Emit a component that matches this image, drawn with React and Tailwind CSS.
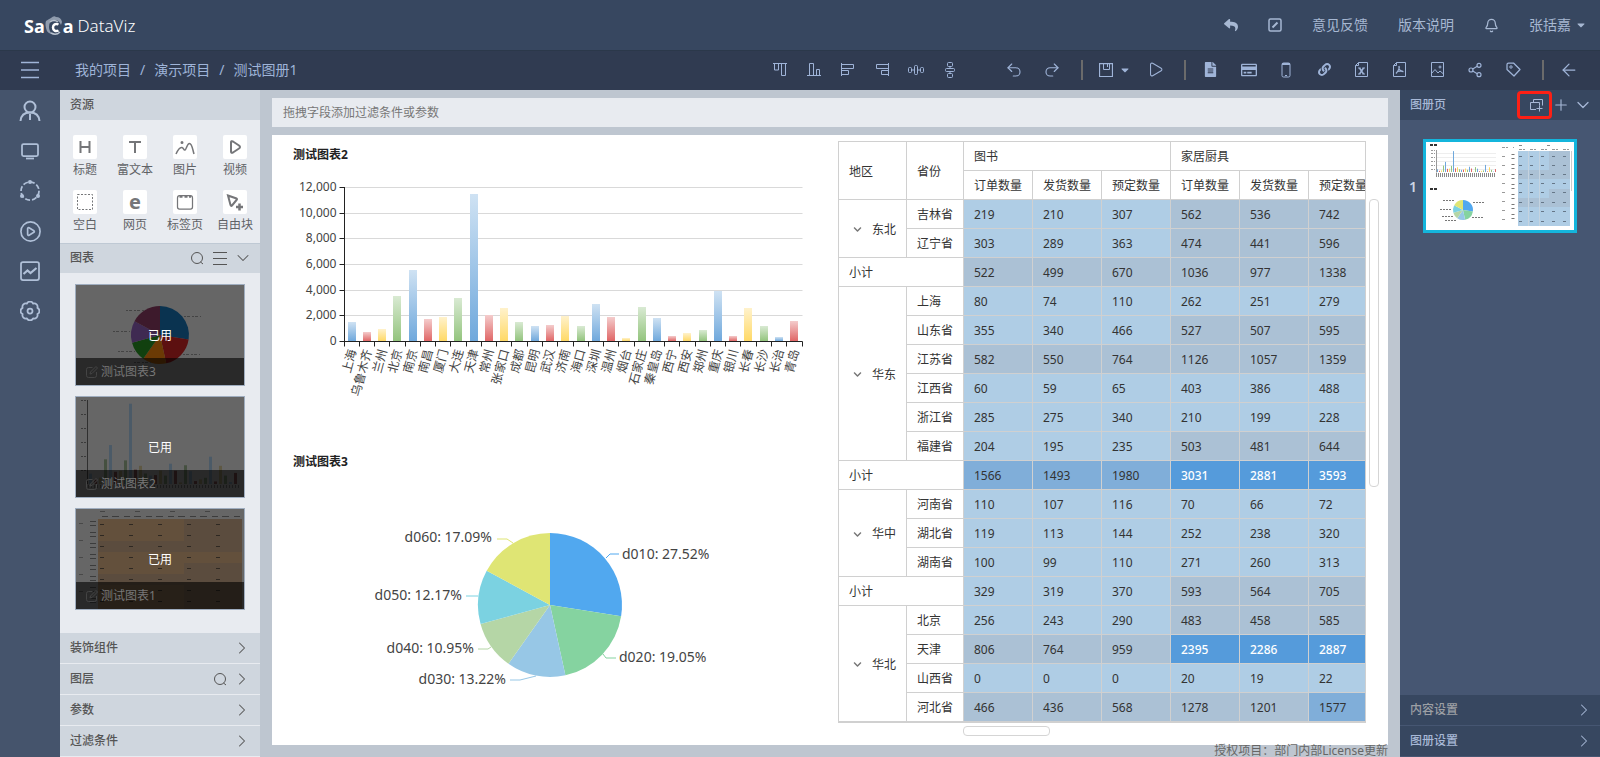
import {
  ArrowLeft,
  Bell,
  ChevronDown,
  ChevronRight,
  CirclePlay,
  Play,
  Plus,
  Redo2,
  Share2,
  Undo2,
} from "lucide-react";
import { FaCaretDown, FaChevronDown, FaFileAlt, FaLink, FaRegCreditCard, FaReply } from "react-icons/fa";

const cities = [
  ["上海", 1480],
  ["乌鲁木齐", 675],
  ["兰州", 900],
  ["北京", 3530],
  ["南京", 5560],
  ["南昌", 1740],
  ["厦门", 1870],
  ["大连", 3380],
  ["天津", 11480],
  ["常州", 2050],
  ["张家口", 2600],
  ["成都", 1500],
  ["昆明", 1200],
  ["武汉", 1270],
  ["济南", 1920],
  ["海口", 1200],
  ["深圳", 2900],
  ["温州", 1900],
  ["烟台", 220],
  ["石家庄", 2680],
  ["秦皇岛", 1820],
  ["西宁", 420],
  ["西安", 650],
  ["郑州", 880],
  ["重庆", 3900],
  ["银川", 360],
  ["长春", 2600],
  ["长沙", 1200],
  ["长治", 280],
  ["青岛", 1580],
];

const barColors = [
  ["#cfe2f3", "#6fa8dc"],
  ["#f4cccc", "#e06666"],
  ["#fff2cc", "#ffd966"],
  ["#d9ead3", "#93c47d"],
];

const slices = [
  { name: "d010", value: 27.52, color: "#51a8ef", line: "313,88 317,84 326,84", x: 329, y: 89, anchor: "start" },
  { name: "d020", value: 19.05, color: "#85d3a0", line: "310,184 313,188 323,188", x: 326, y: 192, anchor: "start" },
  { name: "d030", value: 13.22, color: "#97c7e6", line: "243,206 227,210 217,210", x: 213, y: 214, anchor: "end" },
  { name: "d040", value: 10.95, color: "#b5d6a6", line: "198,177 195,179 185,179", x: 181, y: 183, anchor: "end" },
  { name: "d050", value: 12.17, color: "#7bd2e1", line: "185,126 173,126", x: 169, y: 130, anchor: "end" },
  { name: "d060", value: 17.09, color: "#dfe574", line: "220,73 214,69 204,69", x: 199, y: 72, anchor: "end" },
];

const darkSlices = ["#0a3350", "#5c1010", "#6b3a05", "#11400f", "#3f2a52", "#3d1a2c"];

const regions = [
  {
    name: "东北",
    rows: [
      ["吉林省", 219, 210, 307, 562, 536, 742],
      ["辽宁省", 303, 289, 363, 474, 441, 596],
    ],
    total: [522, 499, 670, 1036, 977, 1338],
  },
  {
    name: "华东",
    rows: [
      ["上海", 80, 74, 110, 262, 251, 279],
      ["山东省", 355, 340, 466, 527, 507, 595],
      ["江苏省", 582, 550, 764, 1126, 1057, 1359],
      ["江西省", 60, 59, 65, 403, 386, 488],
      ["浙江省", 285, 275, 340, 210, 199, 228],
      ["福建省", 204, 195, 235, 503, 481, 644],
    ],
    total: [1566, 1493, 1980, 3031, 2881, 3593],
  },
  {
    name: "华中",
    rows: [
      ["河南省", 110, 107, 116, 70, 66, 72],
      ["湖北省", 119, 113, 144, 252, 238, 320],
      ["湖南省", 100, 99, 110, 271, 260, 313],
    ],
    total: [329, 319, 370, 593, 564, 705],
  },
  {
    name: "华北",
    rows: [
      ["北京", 256, 243, 290, 483, 458, 585],
      ["天津", 806, 764, 959, 2395, 2286, 2887],
      ["山西省", 0, 0, 0, 20, 19, 22],
      ["河北省", 466, 436, 568, 1278, 1201, 1577],
    ],
  },
];

const measures = ["订单数量", "发货数量", "预定数量"];
const lowLimits = [450, 430, 550];

function cellTone(value, index) {
  if (value > 2100) return "bg-[#559bdb] text-white font-medium";
  if (value > 1400) return "bg-[#80aed9] font-normal";
  if (value > lowLimits[index % 3]) return "bg-[#abc1d5] font-normal";
  return "bg-[#afcde5] font-normal";
}

function slicePaths(cx, cy, r) {
  let angle = 0;
  const point = (a) => `${cx + r * Math.sin(a)},${cy - r * Math.cos(a)}`;
  return slices.map((s) => {
    const start = angle;
    angle += (s.value / 100) * Math.PI * 2;
    return `M${cx},${cy}L${point(start)}A${r},${r} 0 0 1 ${point(angle)}Z`;
  });
}

/* ---------- icons ---------- */

function Icon({ size = 14, box = 14, width = 1, className, children }) {
  return (
    <svg
      width={size}
      height={size}
      viewBox={`0 0 ${box} ${box}`}
      fill="none"
      stroke="currentColor"
      strokeWidth={width}
      className={className}
      aria-hidden="true"
    >
      {children}
    </svg>
  );
}

const AlignTop = () => (
  <Icon>
    <path d="M0 .5h14M1.5.5v6.500h4V.5M8.500.5v12h4V.5" />
  </Icon>
);
const AlignBottom = () => (
  <Icon>
    <path d="M0 12.500h14M2.500 12.500V.5h4v12M9.500 12.500V6.500h3v6" />
  </Icon>
);
const AlignLeft = () => (
  <Icon>
    <path d="M.5 0v13M.5 1.500h12v4H.5M.5 7.500h7v4h-7" />
  </Icon>
);
const AlignRight = () => (
  <Icon>
    <path d="M13.500 0v13M13.500 1.500h-12v4h12M13.500 7.500h-7v4h7" />
  </Icon>
);
const DistributeX = () => (
  <Icon size={16} box={16}>
    <rect x=".5" y="5.500" width="3" height="5" rx="1" />
    <rect x="6.500" y="3.500" width="3" height="9" rx="1" />
    <rect x="12.500" y="5.500" width="3" height="5" rx="1" />
    <path d="M3.500 8h3M9.500 8h3" />
  </Icon>
);
const DistributeY = () => (
  <Icon size={16} box={16}>
    <rect x="5.500" y=".5" width="5" height="4" rx="1" />
    <rect x="3.500" y="6.500" width="9" height="3" rx="1" />
    <rect x="5.500" y="11.500" width="5" height="4" rx="1" />
    <path d="M8 4.500v2M8 9.500v2" />
  </Icon>
);
const Save = () => (
  <Icon>
    <path d="M.5.5h13v13H.5z" strokeWidth="1.250" />
    <path d="M4.500.5v6h6v-6M8.500 1v3" />
  </Icon>
);
const Phone = () => (
  <Icon size={16} box={16}>
    <rect x="4" y="1" width="8" height="14" rx="1.500" />
    <path d="M4 2h8" strokeWidth="2" />
    <path d="M7 13.500h2" />
  </Icon>
);
const ExcelFile = () => (
  <Icon size={15} box={15}>
    <path d="M4.500.5h9v14h-12v-11zM4.500.5v3h-3" />
    <path d="M5.500 6l4 6M9.500 6l-4 6" strokeWidth="1.500" />
    <path d="M4 6h2.500M8.500 6H11M4 12h2.500M8.500 12H11" />
  </Icon>
);
const PdfFile = () => (
  <Icon size={15} box={15}>
    <path d="M4.500.5h9v14h-12v-11zM4.500.5v3h-3" />
    <path d="M7 4c1 2 0 4-3 7.500M7 4v3c1 2 2 2.500 4.500 2.500M5.500 9.500l5-.5" strokeWidth="1.250" />
  </Icon>
);
const ImageFile = () => (
  <Icon size={15} box={15}>
    <path d="M1.500.5h12v14h-12zM1.500 11.500l3.500-4 3 3.500 2-2 3.500 3" />
    <circle cx="10" cy="5" r="1" />
  </Icon>
);
const ShareRing = () => <Share2 size={16} strokeWidth={1.75} />;
const TagIcon = () => (
  <Icon size={15} box={15}>
    <path d="M1 2.500Q1 1 2.500 1h5L14 7.500 8 14 1 7.500z" strokeWidth="1.250" strokeLinejoin="round" />
    <circle cx="5" cy="5" r="1.200" />
  </Icon>
);
const SearchIcon = () => (
  <Icon>
    <circle cx="7" cy="7" r="5.500" />
    <path d="M10.500 11l2.500 2" />
  </Icon>
);
const ListIcon = () => (
  <Icon>
    <path d="M0 1.500h14M0 7.500h14M0 13.500h14" />
  </Icon>
);
const EditIcon = () => (
  <Icon size={12} box={12}>
    <path d="M6.500 1.500H2.500q-2 0-2 2v6q0 2 2 2h6q2 0 2-2V6M4 8l.5-2L10 .5 11.500 2 6 7.500z" />
  </Icon>
);

/* ---------- header ---------- */

function Logo() {
  return (
    <div className="flex items-center pt-[2px] text-white">
      <span className="text-lg leading-5 font-bold">Sa</span>
      <svg width="18" height="20" viewBox="0 0 18 20" fill="none" aria-hidden="true">
        <path d="M1 5Q4 3 6 2q3-3 5-1 5 0 6 5l-1 3q-2-5-6-5-6 0-6 7 0 5 4 7-6 0-7-6-1-4 0-7z" fill="#8f9bad" />
        <path d="M5 6q4-3 8 0M6 17q5 3 9-1" stroke="#b9c2ce" strokeWidth="1.500" />
        <path d="M13.500 8.500C10.500 7 8 8.500 8 11.500s2.500 4.500 5.500 3" stroke="#fff" strokeWidth="2.500" />
      </svg>
      <span className="text-lg leading-5 font-bold">a</span>
      <span className="pl-1 text-[17px] leading-5 font-light">DataViz</span>
    </div>
  );
}

function Header() {
  return (
    <header className="flex h-[50px] shrink-0 items-center justify-between bg-[#374760] pr-[15px] pl-6 text-sm text-[#a7b8d2]">
      <Logo />
      <nav className="flex items-center gap-[30px]">
        <button aria-label="返回">
          <FaReply size={14} />
        </button>
        <button aria-label="全屏">
          <Icon width={1.5}>
            <rect x="1" y="1" width="12" height="12" rx="1.500" />
            <path d="M4.500 9.500l5-5" strokeWidth="2" />
          </Icon>
        </button>
        <a href="#feedback">意见反馈</a>
        <a href="#release">版本说明</a>
        <button aria-label="通知">
          <Bell size={15} strokeWidth={2} />
        </button>
        <button className="flex items-center gap-[6px]">
          张括嘉
          <FaCaretDown size={12} className="w-2" />
        </button>
      </nav>
    </header>
  );
}

const alignTools = [
  ["顶部对齐", <AlignTop />],
  ["底部对齐", <AlignBottom />],
  ["左对齐", <AlignLeft />],
  ["右对齐", <AlignRight />],
  ["水平分布", <DistributeX />],
  ["垂直分布", <DistributeY />],
];

const outputTools = [
  ["文档", <FaFileAlt size={15} />],
  ["卡片", <FaRegCreditCard size={16} />],
  ["手机", <Phone />],
  ["链接", <FaLink size={13} />],
  ["导出Excel", <ExcelFile />],
  ["导出PDF", <PdfFile />],
  ["导出图片", <ImageFile />],
  ["分享", <ShareRing />],
  ["标签", <TagIcon />],
];

function Divider() {
  return <span className="h-5 w-[2px] bg-[#6b6b6b]" />;
}

function Toolbar() {
  return (
    <div className="flex h-10 shrink-0 items-center bg-[#303b51] pb-px text-[#9fb4d8] inset-shadow-[0_1px_0_#2b384a]">
      <button aria-label="菜单" className="flex w-[60px] justify-center">
        <Icon size={18} box={18} width={1.5}>
          <path d="M0 1.500h18M0 9h18M0 16.500h18" />
        </Icon>
      </button>
      <nav className="flex gap-[9px] pl-[15px] text-sm">
        <a href="#projects">我的项目</a>
        <span>/</span>
        <a href="#demo">演示项目</a>
        <span>/</span>
        <a href="#book">测试图册1</a>
      </nav>
      <div className="ml-auto flex items-center">
        {alignTools.map(([label, icon]) => (
          <button key={label} aria-label={label} className="flex w-[34px] justify-center">
            {icon}
          </button>
        ))}
      </div>
      <div className="flex items-center pr-[10px] pl-7">
        <button aria-label="撤销" className="flex w-[38px] justify-center">
          <Undo2 size={18} strokeWidth={1.5} />
        </button>
        <button aria-label="重做" className="flex w-[38px] justify-center">
          <Redo2 size={18} strokeWidth={1.5} />
        </button>
      </div>
      <Divider />
      <div className="flex items-center pr-5 pl-4">
        <button aria-label="保存" className="flex items-center gap-[6px]">
          <Save />
          <FaCaretDown size={12} />
        </button>
        <button aria-label="播放" className="pl-4">
          <Play size={17} strokeWidth={1.5} />
        </button>
      </div>
      <Divider />
      <div className="grid w-[356px] grid-cols-9 pr-[10px] pl-[6px]">
        {outputTools.map(([label, icon]) => (
          <button key={label} aria-label={label} className="flex items-center justify-center">
            {icon}
          </button>
        ))}
      </div>
      <Divider />
      <button aria-label="退出" className="flex w-14 justify-center pr-[6px]">
        <ArrowLeft size={20} strokeWidth={1.5} />
      </button>
    </div>
  );
}

/* ---------- left side ---------- */

function SideRail() {
  const items = [
    [
      "用户",
      <Icon size={22} box={22} width={2}>
        <circle cx="11" cy="7" r="5.500" />
        <path d="M1.500 21c.5-5.500 4-8.500 9.500-8.500s9 3 9.500 8.500M11 14v6" />
      </Icon>,
    ],
    [
      "屏幕",
      <Icon size={20} box={20} width={1.75}>
        <rect x="2" y="3" width="16" height="12" rx="1.500" />
        <path d="M6 17.500h8" />
      </Icon>,
    ],
    [
      "关系",
      <Icon size={22} box={22} width={1.75}>
        <circle cx="11" cy="11" r="9" strokeDasharray="5 2" />
        <circle cx="11" cy="2" r="2" fill="currentColor" stroke="none" />
        <circle cx="3" cy="16" r="2" fill="currentColor" stroke="none" />
        <circle cx="19" cy="16" r="2" fill="currentColor" stroke="none" />
      </Icon>,
    ],
    ["播放", <CirclePlay size={23} strokeWidth={1.75} />],
    [
      "图表",
      <Icon size={20} box={20} width={1.75}>
        <rect x="1" y="1" width="18" height="18" rx="2" />
        <path d="M3.500 13l4-3.500 3 2.500 6-5" strokeWidth="2.200" />
      </Icon>,
    ],
    [
      "设置",
      <Icon size={20} box={20} width={1.75}>
        <path
          d="M17.400 6.900a3.400 3.400 0 0 1 0 6.200a3.400 3.400 0 0 1-4.300 4.300a3.400 3.400 0 0 1-6.200 0a3.400 3.400 0 0 1-4.300-4.300a3.400 3.400 0 0 1 0-6.200a3.400 3.400 0 0 1 4.300-4.300a3.400 3.400 0 0 1 6.200 0a3.400 3.400 0 0 1 4.300 4.300z"
          strokeLinejoin="round"
        />
        <circle cx="10" cy="10" r="2.500" />
      </Icon>,
    ],
  ];
  return (
    <aside className="w-[60px] shrink-0 bg-[#45546c] pt-px text-[#b0c0d8]">
      {items.map(([label, icon]) => (
        <button key={label} aria-label={label} className="flex h-10 w-full items-center justify-center">
          {icon}
        </button>
      ))}
    </aside>
  );
}

const widgets = [
  ["标题", <path d="M2.500 1v12M11.500 1v12M2.500 7h9" />],
  ["富文本", <path d="M1 2h12M7 2v11" />],
  [
    "图片",
    <g strokeWidth="1.500">
      <path d="M-2 14c2-4.500 4-7 6-6.500s1.500 3 3 2.500S9 3.500 11.500 3.500 14.500 9 16 14" />
      <circle cx="4" cy="2.500" r=".75" />
    </g>,
  ],
  ["视频", <path d="M3 2.500Q3 .5 5 1.500l6 4q2 1.500 0 3l-6 4q-2 1-2-1z" />],
  ["空白", <path d="M-.5-.5h15v15h-15z" strokeDasharray="2 1.500" strokeWidth="1" />],
  ["网页", null],
  [
    "标签页",
    <g>
      <path d="M-.5 3q0-2.500 2-2.500h11q2 0 2 2.500v9q0 2-2 2h-11q-2 0-2-2z" strokeWidth="1.250" />
      <path d="M1.500 1.500h3M6.500 1.500h3M11 1.500h2" strokeWidth="2.500" />
    </g>,
  ],
  [
    "自由块",
    <g>
      <path d="M0 .5l8.500 3q1 .5 0 1.500l-4.500 5.500q-1 1-1.500-.5z" />
      <path d="M11.500 8.500v7M8 12h7" strokeWidth="2.500" />
    </g>,
  ],
];

function Palette() {
  return (
    <div className="grid grid-cols-4 gap-y-3 bg-[#e8ebf0] pt-[15px] pb-[10px] text-[#606266]">
      {widgets.map(([label, drawing]) => (
        <button key={label} className="flex flex-col items-center gap-[3px]">
          <span className="flex h-6 w-6 items-center justify-center rounded-xs bg-white text-[#757679]">
            {drawing ? (
              <Icon width={2} className="overflow-visible">
                {drawing}
              </Icon>
            ) : (
              <b className="text-xl leading-5">e</b>
            )}
          </span>
          <span className="leading-4">{label}</span>
        </button>
      ))}
    </div>
  );
}

function PieThumb() {
  const paths = slicePaths(84, 50, 29);
  return (
    <g>
      {paths.map((d, i) => (
        <path key={d} d={d} fill={darkSlices[i]} />
      ))}
      <path
        d="M50 25.500h18M108 31.500h17M37 46.500h17M42 66.500h17M107 69.500h17M58 77.500h17"
        stroke="#444"
        strokeDasharray="2 1 3 2"
      />
    </g>
  );
}

function BarThumb() {
  const dark = ["#4b5a67", "#4a2e2e", "#5e5843", "#455040"];
  return (
    <g>
      <path d="M11.500 3v84" stroke="#2f2f2f" />
      <path
        d="M5 3.500h6M5 17.500h6M5 31.500h6M5 45.500h6M5 59.500h6M5 73.500h6"
        stroke="#3a3a3a"
        strokeDasharray="2 1"
      />
      {cities.map(([name, value], i) => (
        <rect key={name} x={13 + i * 5} y={87 - value / 143} width="3" height={value / 143} fill={dark[i % 4]} />
      ))}
      <path d="M12 89.500h152" stroke="#444" strokeWidth="3" strokeDasharray="1 2" />
    </g>
  );
}

function TableThumb() {
  return (
    <g>
      <rect x="22" y="10" width="144" height="90" fill="#63503c" />
      <path d="M22 32h144v11H22zM108 10h58v33h-58zM108 54h58v46h-58zM22 65h144v11H22z" fill="#5b4c3e" />
      <path d="M24 2.500h140" stroke="#444" strokeDasharray="5 30" />
      <path d="M26 7.500h138" stroke="#3c3c3c" strokeDasharray="6 4 7 5" />
      <path
        d="M24 15.500h140M24 26.500h140M24 37.500h140M24 48.500h140M24 59.500h140M24 70.500h140M24 81.500h140M24 92.500h140"
        stroke="#2e2822"
        strokeDasharray="4 25"
      />
      <path d="M17 12v84" stroke="#3c3c3c" strokeWidth="6" strokeDasharray="1 3 1 6" />
      <path d="M5 14v80" stroke="#484848" strokeWidth="4" strokeDasharray="1 16" />
    </g>
  );
}

const thumbs = [
  ["测试图表3", <PieThumb />],
  ["测试图表2", <BarThumb />],
  ["测试图表1", <TableThumb />],
];

function ChartThumb({ title, children }) {
  return (
    <li className="relative h-[102px] border border-[#9fadbf] bg-[#666]">
      <svg className="h-full w-full" viewBox="0 0 168 100" preserveAspectRatio="none" aria-hidden="true">
        {children}
      </svg>
      <div className="absolute inset-x-0 bottom-0 flex h-[27px] items-center gap-[3px] bg-black/60 pl-[10px] text-[#777]">
        <span className="text-[#444]">
          <EditIcon />
        </span>
        {title}
      </div>
      <span className="absolute inset-0 flex items-center justify-center pt-px text-white">已用</span>
    </li>
  );
}

function PanelRow({ title, search }) {
  return (
    <button className="flex h-[31px] w-full items-center border-b border-[#e8ebf0] bg-[#cfd6de] pr-2 pl-[10px]">
      <span className="mr-auto font-medium">{title}</span>
      {search && <SearchIcon />}
      <ChevronRight size={20} strokeWidth={1.25} className="ml-[5px]" />
    </button>
  );
}

function ResourcePanel() {
  return (
    <aside className="flex w-[200px] shrink-0 flex-col bg-[#e8ebf0] text-[#555]">
      <h2 className="flex h-[30px] items-center bg-[#cfd6de] pl-[10px] font-medium">资源</h2>
      <Palette />
      <div className="flex h-[30px] items-center border-t border-[#bfc9d4] bg-[#cfd6de] pr-[7px] pb-px pl-[10px]">
        <h2 className="mr-auto font-medium">图表</h2>
        <button aria-label="搜索">
          <SearchIcon />
        </button>
        <button aria-label="列表" className="pl-[9px]">
          <ListIcon />
        </button>
        <button aria-label="收起" className="pl-[6px]">
          <ChevronDown size={20} strokeWidth={1.25} />
        </button>
      </div>
      <ul className="flex flex-1 flex-col gap-[10px] px-[15px] pt-[11px]">
        {thumbs.map(([title, drawing]) => (
          <ChartThumb key={title} title={title}>
            {drawing}
          </ChartThumb>
        ))}
      </ul>
      <PanelRow title="装饰组件" />
      <PanelRow title="图层" search />
      <PanelRow title="参数" />
      <PanelRow title="过滤条件" />
    </aside>
  );
}

/* ---------- canvas ---------- */

function BarChart() {
  const left = 51.5;
  const bottom = 178.5;
  const height = 154;
  const band = 458 / cities.length;
  const yOf = (v) => bottom - Math.round((v / 12000) * height);
  return (
    <svg width="530" height="291" viewBox="0 0 530 291" fontSize="12" fill="#444">
      <defs>
        {barColors.map(([from, to], i) => (
          <linearGradient key={to} id={`bar${i}`} x1="0" y1="0" x2="0" y2="1">
            <stop offset="0" stopColor={from} />
            <stop offset="1" stopColor={to} />
          </linearGradient>
        ))}
      </defs>
      {[0, 2000, 4000, 6000, 8000, 10000, 12000].map((v) => (
        <g key={v}>
          {v > 0 && <path d={`M${left} ${yOf(v)}h458`} stroke="#d9d9d9" />}
          <path d={`M${left - 5} ${yOf(v)}h5`} stroke="#222" />
          <text x={left - 8} y={yOf(v) + 3} textAnchor="end">
            {v.toLocaleString("en-US")}
          </text>
        </g>
      ))}
      {cities.map(([name, value], i) => {
        const x = left + band * i;
        return (
          <g key={name}>
            <rect
              x={Math.round(x + 3)}
              y={yOf(value) - 0.5}
              width="8"
              height={bottom - yOf(value)}
              fill={`url(#bar${i % 4})`}
            />
            <path d={`M${Math.round(x) - 0.5} ${bottom}v5`} stroke="#222" />
            <text
              textAnchor="end"
              dominantBaseline="central"
              transform={`translate(${x + band / 2} ${bottom + 8}) rotate(-75)`}
            >
              {name}
            </text>
          </g>
        );
      })}
      <path d={`M${left} 24v${height + 1}M${left} ${bottom}h458v5`} stroke="#222" fill="none" />
    </svg>
  );
}

function PieChart() {
  const paths = slicePaths(257, 135, 72);
  return (
    <svg width="530" height="240" viewBox="0 0 530 240" fontSize="14" fill="#444">
      {slices.map((s, i) => (
        <g key={s.name}>
          <path d={paths[i]} fill={s.color} />
          <polyline points={s.line} stroke={s.color} fill="none" />
          <text x={s.x} y={s.y} textAnchor={s.anchor}>
            {`${s.name}: ${s.value}%`}
          </text>
        </g>
      ))}
    </svg>
  );
}

const cell = "h-[29px] border-r border-b border-[#d0d0d0] pt-[2px] pl-[10px] text-left whitespace-nowrap";

function ValueCells({ values }) {
  return values.map((v, i) => (
    <td key={i} className={`${cell} ${cellTone(v, i)}`}>
      {v}
    </td>
  ));
}

function RegionRows({ region }) {
  return (
    <>
      {region.rows.map(([province, ...values], i) => (
        <tr key={province}>
          {i === 0 && (
            <th rowSpan={region.rows.length} className={`${cell} font-normal`}>
              <span className="flex items-center gap-[10px] pl-1">
                <FaChevronDown size={9} className="text-[#777]" />
                {region.name}
              </span>
            </th>
          )}
          <th className={`${cell} font-normal`}>{province}</th>
          <ValueCells values={values} />
        </tr>
      ))}
      {region.total && (
        <tr>
          <th colSpan={2} className={`${cell} font-normal`}>
            小计
          </th>
          <ValueCells values={region.total} />
        </tr>
      )}
    </>
  );
}

function PivotTable() {
  return (
    <div className="flex shrink-0 items-start pt-[6px] pr-[9px]">
      <div>
        <div className="w-[528px] overflow-hidden border border-[#d0d0d0]">
          <table className="w-[539px] table-fixed border-separate border-spacing-0 text-[#333]">
            <colgroup>
              <col className="w-[68px]" />
              <col className="w-[57px]" />
              <col span={6} className="w-[69px]" />
            </colgroup>
            <thead>
              <tr>
                <th rowSpan={2} className={`${cell} font-normal`}>地区</th>
                <th rowSpan={2} className={`${cell} font-normal`}>省份</th>
                <th colSpan={3} className={`${cell} font-normal`}>图书</th>
                <th colSpan={3} className={`${cell} font-normal`}>家居厨具</th>
              </tr>
              <tr>
                {[...measures, ...measures].map((m, i) => (
                  <th key={i} className={`${cell} font-normal`}>{m}</th>
                ))}
              </tr>
            </thead>
            <tbody>
              {regions.map((region) => (
                <RegionRows key={region.name} region={region} />
              ))}
            </tbody>
          </table>
        </div>
        <div className="mt-[3px] ml-[125px] h-[10px] w-[87px] rounded-sm border border-[#d5d5d5]" />
      </div>
      <div className="mt-[58px] ml-[3px] h-[288px] w-[10px] rounded-sm border border-[#d5d5d5]" />
    </div>
  );
}

function Workspace() {
  return (
    <main className="flex min-w-0 flex-1 flex-col bg-[#bec6d0] px-3 pt-2">
      <div className="flex h-[29px] shrink-0 items-center bg-[#e8ebf0] pl-[11px] text-[#777]">
        拖拽字段添加过滤条件或参数
      </div>
      <div className="mt-2 flex min-h-0 flex-1 bg-white">
        <div className="flex min-w-0 flex-1 flex-col overflow-hidden pt-3 pl-[21px]">
          <section>
            <h3 className="font-bold text-[#222]">测试图表2</h3>
            <BarChart />
          </section>
          <section>
            <h3 className="font-bold text-[#222]">测试图表3</h3>
            <PieChart />
          </section>
        </div>
        <PivotTable />
      </div>
      <footer className="h-3 text-right leading-3 text-[#666]">授权项目：部门内部License更新</footer>
    </main>
  );
}

/* ---------- right side ---------- */

function PagePreview() {
  const pie = slicePaths(0, 0, 10);
  return (
    <svg className="h-full w-full" viewBox="0 0 148 88" preserveAspectRatio="none" aria-hidden="true">
      <path d="M4 3h8M4 47h7" stroke="#333" strokeWidth="2" strokeDasharray="3 1" />
      <path d="M10 11.500h60M10 15.500h60M10 19.500h60M10 23.500h60M10 27.500h60" stroke="#eee" />
      <path
        d="M5 8.500h4M5 11.500h4M5 15.500h4M5 19.500h4M5 23.500h4M5 27.500h4"
        stroke="#999"
        strokeDasharray="2 1"
      />
      <path d="M10.500 8v22.500" stroke="#999" />
      {cities.map(([name, value], i) => (
        <rect key={name} x={11 + i * 2} y={30 - value / 550} width="1" height={value / 550} fill={barColors[i % 4][1]} />
      ))}
      <path d="M10 33h60" stroke="#888" strokeWidth="4" strokeDasharray="1 1" />
      <g transform="translate(37 68)">
        {pie.map((d, i) => (
          <path key={d} d={d} fill={slices[i].color} />
        ))}
      </g>
      <path
        d="M17 58.500h11M14 67.500h11M16 74.500h11M19 78.500h11M47 60.500h11M46 75.500h11"
        stroke="#777"
        strokeDasharray="2 1"
      />
      <rect x="92" y="9" width="52" height="75" fill="#afcde5" />
      <path d="M123 9h21v19h-21zM92 28h52v9H92zM123 47h21v9h-21zM92 56h52v9H92z" fill="#abc1d5" />
      <path d="M102.500 9v75M113.500 9v75" stroke="#c5d3df" />
      <path d="M93 3.500h50" stroke="#888" strokeDasharray="3 25" />
      <path d="M76 5.500h12M93 7.500h50" stroke="#999" strokeDasharray="3 1 2 5" />
      <path
        d="M93 14.500h50M93 23.500h50M93 32.500h50M93 41.500h50M93 50.500h50M93 60.500h50M93 69.500h50M93 79.500h50"
        stroke="#678"
        strokeDasharray="3 8"
      />
      <path d="M87 12v70" stroke="#777" strokeWidth="3" strokeDasharray="1 3 1 5" />
      <path d="M77.500 14v66" stroke="#999" strokeWidth="3" strokeDasharray="1 8" />
      <path d="M145.500 9v40" stroke="#ccc" />
    </svg>
  );
}

function PagesPanel() {
  return (
    <aside className="flex w-[200px] shrink-0 flex-col bg-[#465672] text-[#a7b8d6]">
      <div className="flex h-[30px] items-center bg-[#374760] pr-[7px] pl-[10px]">
        <h2 className="mr-auto font-medium">图册页</h2>
        <button
          aria-label="复制页"
          className="flex h-[28px] w-[35px] items-center justify-center rounded-sm border-3 border-[#fd2015] pl-1"
        >
          <Icon size={13} box={13}>
            <path d="M3.500 3V.5h9v6M6 10.500H.5V3.500h9v3M9.500 6.500v6M6.500 9.500h6" />
          </Icon>
        </button>
        <button aria-label="新增页">
          <Plus size={18} strokeWidth={1.5} />
        </button>
        <button aria-label="收起" className="pl-[3px]">
          <ChevronDown size={20} strokeWidth={1.5} />
        </button>
      </div>
      <div className="flex flex-1 items-start pt-[19px] pr-[23px] pl-[9px]">
        <span className="w-[14px] pt-[38px] text-sm font-semibold text-[#cdd6e4]">1</span>
        <button aria-label="第1页" className="h-[94px] flex-1 border-3 border-[#14b5dc] bg-white">
          <PagePreview />
        </button>
      </div>
      {["内容设置", "图册设置"].map((title) => (
        <button
          key={title}
          className="flex h-[31px] items-center justify-between border-b border-[#465672] bg-[#374760] pr-[6px] pl-[10px]"
        >
          <span className={title === "内容设置" ? "font-medium text-[#9c9fa4]" : "font-medium"}>{title}</span>
          <ChevronRight size={20} strokeWidth={1.25} />
        </button>
      ))}
    </aside>
  );
}

export default function App() {
  return (
    <div className="flex h-screen min-h-[757px] flex-col font-['Noto_Sans','Noto_Sans_CJK_SC',sans-serif] text-xs">
      <Header />
      <Toolbar />
      <div className="flex min-h-0 flex-1">
        <SideRail />
        <ResourcePanel />
        <Workspace />
        <PagesPanel />
      </div>
    </div>
  );
}
